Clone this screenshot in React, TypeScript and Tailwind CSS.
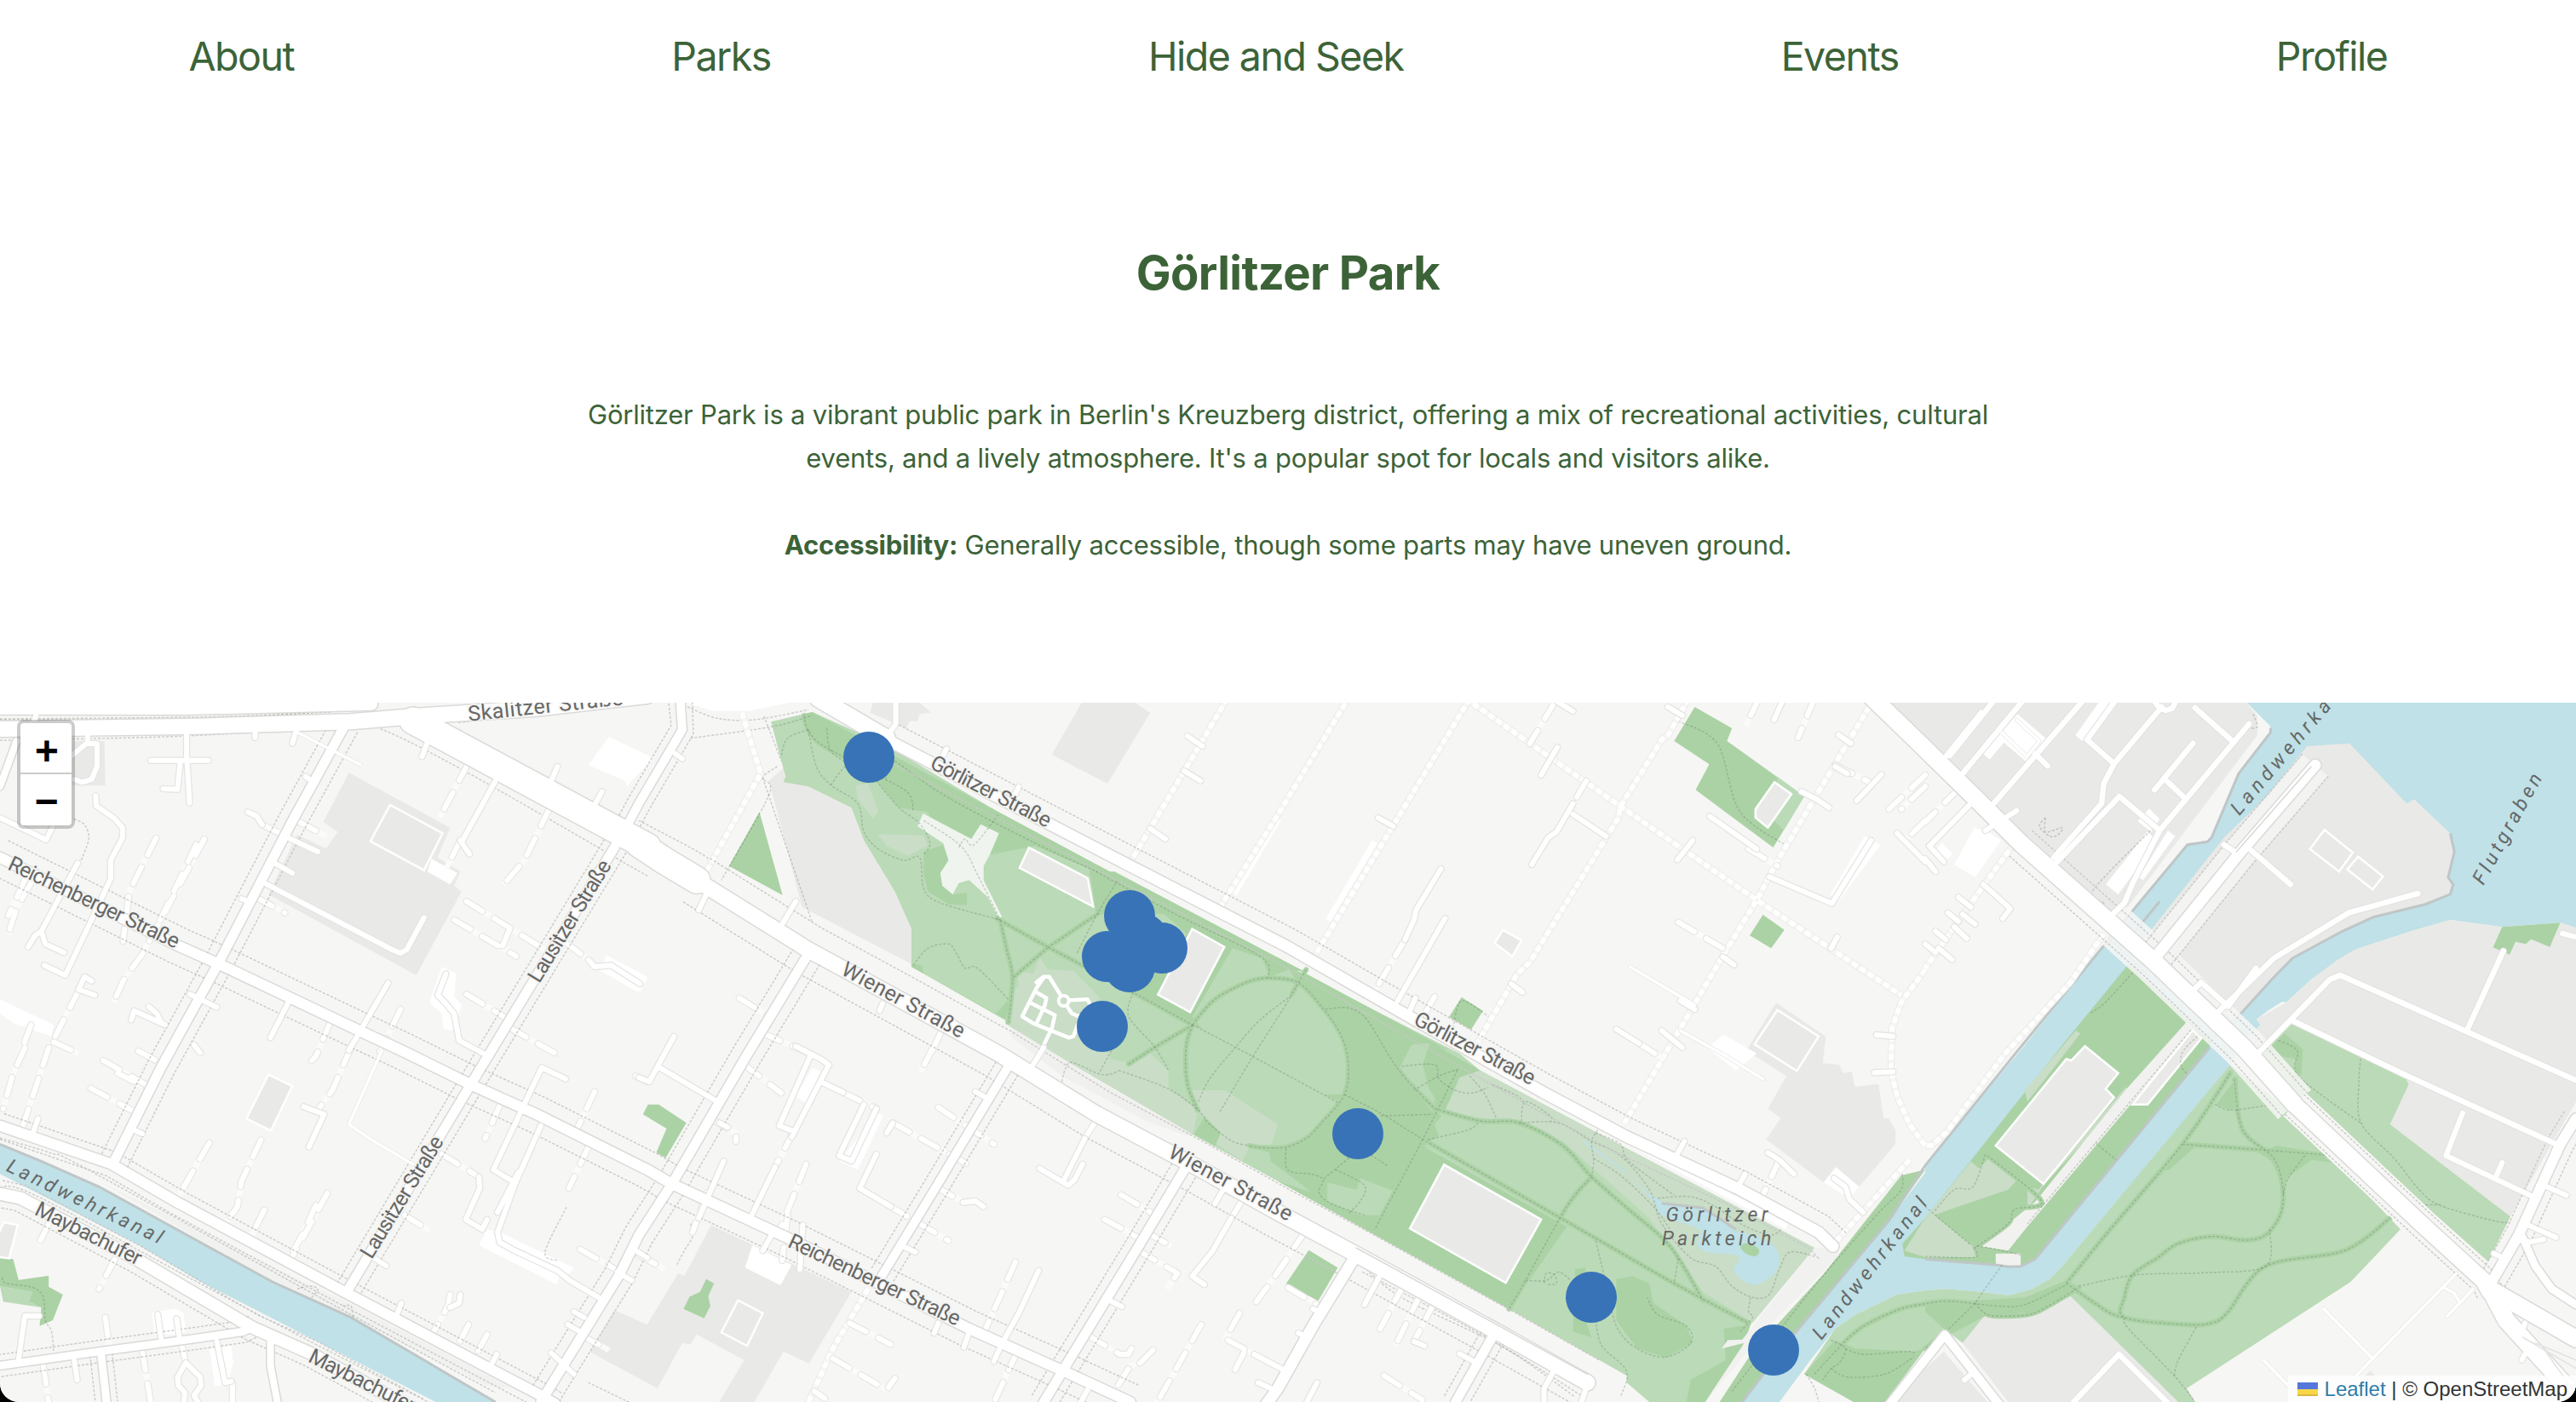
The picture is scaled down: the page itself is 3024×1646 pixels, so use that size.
import React from "react";

/* ------------------------------------------------------------------ */
/* Map geometry                                                        */
/* Each string lists "x y" pairs on a survey sheet. A, C, E, G run     */
/* from west to east; B, D, F, H are the same sheets shifted down by   */
/* 410 map pixels; K and L are detail sheets.                          */
/* ------------------------------------------------------------------ */

type Pt = [number, number];

const SHEETS: Record<string, [number, number, number]> = {
  A: [0, 820, 760 / 1568],
  B: [0, 1230, 760 / 1568],
  C: [750, 820, 760 / 1568],
  D: [750, 1230, 760 / 1568],
  E: [1500, 820, 760 / 1568],
  F: [1500, 1230, 760 / 1568],
  G: [2260, 820, 764 / 1568],
  H: [2260, 1230, 764 / 1568],
  K: [1180, 1030, 1 / 3],
  L: [2380, 1100, 1 / 3],
};

function points(src: string): Pt[] {
  let sheet = SHEETS.A;
  const out: Pt[] = [];
  let x: number | null = null;
  for (const tok of src.trim().split(/\s+/)) {
    if (SHEETS[tok]) {
      sheet = SHEETS[tok];
      continue;
    }
    const n = Number(tok);
    if (x === null) {
      x = n;
    } else {
      out.push([sheet[0] + x * sheet[2], sheet[1] + n / 3]);
      x = null;
    }
  }
  return out;
}

const toPath = (pts: Pt[]) =>
  "M" + pts.map(([x, y]) => `${x.toFixed(1)} ${y.toFixed(1)}`).join("L");
const line = (src: string) => toPath(points(src));
const lines = (list: string[]) => list.map(line).join("");
const areas = (list: string[]) => list.map((s) => line(s) + "Z").join("");

/* Parallel copy of a line, used for the pavements beside a street. */
function offset(src: string, d: number): string {
  const p = points(src);
  return toPath(
    p.map(([x, y], i) => {
      const a = p[Math.max(0, i - 1)];
      const b = p[Math.min(p.length - 1, i + 1)];
      const dx = b[0] - a[0];
      const dy = b[1] - a[1];
      const l = Math.hypot(dx, dy) || 1;
      return [x - (dy / l) * d, y + (dx / l) * d] as Pt;
    }),
  );
}

/* Smooth curve through the points, for the winding park paths. */
function smooth(src: string): string {
  const p = points(src);
  let d = `M${p[0][0].toFixed(1)} ${p[0][1].toFixed(1)}`;
  for (let i = 0; i < p.length - 1; i++) {
    const a = p[Math.max(0, i - 1)];
    const b = p[i];
    const c = p[i + 1];
    const e = p[Math.min(p.length - 1, i + 2)];
    const k = 0.16;
    d += `C${(b[0] + (c[0] - a[0]) * k).toFixed(1)} ${(b[1] + (c[1] - a[1]) * k).toFixed(1)} ${(c[0] - (e[0] - b[0]) * k).toFixed(1)} ${(c[1] - (e[1] - b[1]) * k).toFixed(1)} ${c[0].toFixed(1)} ${c[1].toFixed(1)}`;
  }
  return d;
}

const WATER = [
  "B 0 340 100 400 240 490 660 825 850 950 1200 1248 1055 1248 480 820 330 690 0 445",
  "G 765 0 1568 0 1568 808 1530 790 1390 805 1265 780 1180 815 1035 885 990 925 930 990 870 1070 860 1068 825 1100 798 1130 808 1150 780 1190 735 1290 H 600 300 330 770 300 815 255 852 200 872 120 858 50 850 0 855 F 1568 855 1500 870 1400 940 1350 990 1290 1100 1215 1248 1125 1248 1250 1010 1480 610 1568 440 H 0 415 235 0 G 470 800 632 515 680 505 690 490 755 265 832 120 830 95",
];

const GREY = [
  "A 845 262 1090 455 1060 560 1115 610 1100 660 1118 680 1008 975 650 690 720 480 790 528 818 470 783 435",
  "A 175 150 253 150 255 307 175 307",
  "C 1078 0 1205 0 1205 18 1238 52 1135 300 1000 198",
  "C 570 0 680 14 708 50 680 55 675 80 655 80 648 105 560 50",
  "C 350 245 355 290 410 310 515 385 545 500 620 680 660 810 660 935 395 735 315 290",
  "D 175 625 515 860 412 1112 350 1070 280 1248 195 1248 255 1100 140 1010 125 1045 105 1040 45 1200 -120 1070 -60 925 20 975 95 795 110 805",
  "E 1207 1072 1327 1190 1320 1285 1360 1290 1370 1320 1390 1315 1398 1368 1455 1358 1467 1478 1480 1480 1496 1520 1496 1570 1408 1720 1352 1650 1322 1705 1183 1553 1218 1478 1187 1445 1232 1330 1135 1240",
  "G -92 0 765 0 800 60 800 130 480 750 430 760 310 600 120 350 0 170",
  "G 920 168 1022 158 1160 370 1178 355 1265 475 1275 540 1260 630 1272 655 1265 690 1205 725 1080 770 1005 820 885 915 835 990 745 1135 650 1040 550 920 520 860 720 490 820 350",
  "G 1265 780 1390 805 1530 790 1568 808 H 1568 190 1410 595 1120 270 1165 130 1155 95 890 -85 800 30 740 -60 780 -40 808 -80 798 -100 870 -160 930 -240 990 -305 1035 -345 1180 -415",
  "H 140 945 270 930 350 875 615 1248 200 1248 90 1040",
  "H -130 1300 45 1070 150 1248 150 1300",
  "L 1207 1527 1260 1580 1160 1580",
];

const LIGHT_GREEN = [
  "C 320 82 420 48 600 165 870 400 1160 625 1568 935 E 0 925 440 1250 F 490 80 760 290 1300 705 1145 975 1130 1040 1035 1248 900 1248 845 1180 845 1155 560 920 0 470 D 1340 305 1080 65 C 895 1140 660 945 660 810 620 680 545 500 515 385 410 310 350 295 355 275",
  "H 735 60 860 200 970 370 1145 640 1025 825 630 1200 650 1248 610 1248 350 875 270 930 145 940 90 1040 45 990 F 1568 1060 1470 1248 1395 1248 1275 1150 1350 990 1400 940 1500 870 1568 855 H 50 850 120 858 200 872 255 852 300 815 330 770",
  "G 885 1145 H 1155 95 1165 130 1120 270 1410 595 1345 790 1200 590 800 30",
];

const DARK_GREEN = [
  "B 0 740 32 745 45 818 118 803 118 842 152 870 128 960 96 980 100 915 70 895 78 860 0 840",
  "C 292 400 218 590 348 693",
  "C 400 55 420 48 1160 625 1250 700 1110 760 1090 600 960 520 850 550 740 520 700 400 630 385 575 290 410 125",
  "C 690 540 737 515 750 570 730 615 735 660 760 690 795 685 795 728 750 725 700 680 690 620",
  "K 300 -20 385 -20 1060 335 1000 325 930 350 905 285 800 250 660 490 690 530 640 520 445 410 640 200 560 130 320 130",
  "C 660 935 685 940 690 970 865 1110 895 1060 900 1140 660 945",
  "K 1000 325 1065 342 1560 608 1490 585 1430 590 1450 640 1400 665 1440 750 1500 820 1560 850 1560 960 F 355 350 700 630 560 920 0 470 K 1080 1110 935 1000 930 970 860 945 990 950 1110 880 1180 790 1120 765 1190 765 1210 670 1190 570 1110 450 1030 370",
  "K 1495 580 F 490 80 445 105 400 230 385 215 K 1490 740 1470 660",
  "F 820 815 860 805 900 830 910 900 990 980 1005 1040 940 1092 870 1060 820 960",
  "F 1145 975 1080 990 1085 1100 1000 1170 990 1248 1035 1248 1110 1110",
  "G 490 935 690 1210 H 685 0 265 745 230 770 170 765 0 745 -50 735 -55 690 0 600 325 0",
  "G 1390 805 1530 790 1505 875 1460 848 1447 865 1422 857 1408 902 1368 877",
  "F 1568 430 1510 450 1320 800 1150 1070 1070 1248 1125 1248 1250 1010 1480 610",
  "F 1350 1030 1400 1060 1540 1070 1568 1060 1470 1248 1395 1248 1275 1150",
  "H 0 890 120 890 240 880 340 820 375 845 270 930 145 945 60 1010 0 930",
  "L 740 490 665 590 715 610 745 600",
  "L 550 730 820 755 880 735 1010 758 1080 795 1000 785 920 845 900 880 860 790 800 750 590 740 500 820 460 828",
  "L 905 340 970 395 965 480 935 530 945 430 845 412 825 420",
  "D 22 200 48 200 115 265 65 388 42 370 67 285 10 235",
  "D 163 815 182 830 168 875 173 910 158 953 108 920 123 877 148 860",
  "D 1370 245 1410 300 1395 345 1345 305",
  "E 1010 30 1100 105 1088 150 1275 345 1200 525 1012 322 1045 232 960 150",
  "E 1175 762 1227 815 1195 880 1143 835",
  "E 445 1052 497 1100 468 1167 415 1122",
  "F 75 713 145 775 98 892 20 832",
  "F 720 780 745 775 745 960 760 1020 715 1000",
];

/* Lawns laid over the darker tree cover. */
const LAWNS = [
  "K 1390 670 1430 590 1495 585 1470 660 1490 740 1520 790 1450 750",
  "F 120 475 190 500 200 460 290 510 250 590 200 590 120 540",
  "F 690 330 760 455 690 600 355 345 390 310 380 270 405 225 490 260 590 265",
  "E 1210 275 1275 345 1225 465 1195 420",
];

const PALE_GREEN = [
  "F 440 105 490 80 1300 705 1150 970 1030 860 960 740 900 600 830 510 690 330 590 262 490 260 405 225",
  "K 0 505 20 420 48 380 40 330 100 340 120 280 150 325 240 330 330 420 370 640 440 655 510 620 575 680 575 745 680 820 660 905 280 685 0 515",
  "K 655 750 775 750 960 870 935 950 860 950 835 1000 745 940 755 895 690 830",
  "C 525 305 555 300 580 395 568 425 530 355",
  "C 578 478 690 482 700 520 650 555 600 520",
  "H 0 600 18 585 115 700 122 738 0 738 -50 715",
  "L 0 530 170 330 187 340 0 580 -10 540",
  "L 345 530 365 545 60 870 0 960 0 880 40 890 60 860",
  "H 0 600 110 400 130 425 160 380 225 460 200 500",
];

const PAVED = [
  "L 560 300 590 322 0 1020 -68 1105 -165 1090 30 930 345 540",
  "H 170 725 230 725 230 770 170 765",
  "F 1300 705 1350 705 1360 730 1190 980 1035 1248 1130 1040 1075 1060 1090 1030 1125 1028",
];

const SHORE = [
  "G 790 50 830 95 832 120 755 265 690 490 680 505 632 515 470 800 430 760 480 740 610 520 800 130",
];

const COURTS = [
  "C 945 525 1087 633 1100 733 922 597",
  "C 1340 812 1418 875 1335 1105 1257 1043",
  "F 403 412 638 605 552 828 320 637",
  "A 945 375 1072 475 1027 605 897 503",
  "B 650 95 708 135 656 292 597 250",
  "B 10 615 43 625 22 742 0 738 -20 700",
  "D 240 890 300 935 262 1050 200 1003",
  "E 1203 295 1244 337 1187 455 1157 420 1157 390",
  "E 545 815 590 852 568 908 525 862",
  "E 1210 1097 1310 1190 1257 1312 1155 1218",
  "G 962 463 1030 543 997 610 927 530",
  "G 1043 557 1103 627 1078 673 1017 602",
  "H 385 -5 465 90 435 145 455 175 285 480 170 345 340 40 352 45",
  "L 583 328 612 358 423 590 370 590",
];

const WHITE_AREAS = [
  "A 1475 135 C 35 210 -30 310 A 1515 290 1425 235",
  "A 1070 945 1105 970 1100 1050 1118 1080 1110 1120 1095 1170 1075 1165 1070 1110 1040 1070",
  "A 1470 905 1568 980 1545 1035 1450 955",
  "A 0 1060 130 1150 125 1190 35 1145 0 1110",
  "A 1045 565 1108 615 1090 655 1035 610",
  "B 1180 640 1160 695 1348 835 1355 800 1380 795 1390 775 1210 650",
  "B 367 932 425 920 445 935 450 1000 430 1010 375 1010",
  "B 508 1060 560 1050 565 1110 550 1190 520 1190",
  "C 0 985 20 985 5 1030 0 1030",
  "C 115 14 180 44 265 44 380 10",
  "C 1540 415 1555 430 1448 695 1435 685",
  "D 420 70 440 85 405 195 380 170",
  "D 580 230 592 240 530 430 485 400",
  "D 275 695 370 765 343 837 257 775",
  "E 1422 485 1460 515 1360 710 1338 690",
  "E 228 500 242 508 128 785 116 778",
  "E 1080 1185 1160 1250 1110 1310 1040 1230",
  "F 1352 422 1408 490 1385 530 1322 475",
  "G 222 55 290 140 245 225 190 155 155 215 140 195 180 125",
  "G 425 0 462 0 378 150 362 130",
  "G 118 455 150 470 183 500 120 630 70 585",
  "G 535 470 560 500 465 690 435 655",
  "G 585 465 602 485 525 640 515 630",
  "G 540 388 565 425 545 470 512 432",
  "G 905 225 950 240 780 530 750 530",
  "G 40 510 65 545 50 580 20 540",
  "F 235 730 510 945 510 970 225 750",
  "F 570 1000 740 1135 740 1155 560 1020",
  "F 845 320 1235 620 1230 640 840 335",
];

/* Streets: [line, width, distance of the pavements (0 for none)] */
const STREETS: [string, number, number][] = [
  ["A 0 35 450 36 900 20", 14, 0],
  ["A 0 108 480 98 850 82 1010 62 1300 35 1568 -10", 18, 0],
  ["A 1000 78 1568 522 C 0 512 60 570 140 640", 31, 0],
  ["C 140 640 410 885 600 1035 870 1250 D 1110 235 1350 420 F 0 580 190 728 530 1000 750 1180", 18, 30],
  ["C 435 0 600 140", 20, 0],
  ["C 600 145 1190 590 1568 872 E 330 1130 F 640 155 840 310 1120 500 1310 650 1345 700", 13, 22],
  ["A 835 95 705 440 530 930 390 1300 B 275 405", 11, 17],
  ["A 0 560 430 870 530 935 870 1170 980 1245 B 1140 130 1300 235 1568 430 D 80 480 360 670 800 990 1030 1140 1190 1248", 12, 22],
  ["C 100 0 105 110 0 370 A 1520 445", 10, 14],
  ["A 1490 520 1190 1240 B 1140 130 1070 300 840 860", 11, 15],
  ["A 40 150 0 310", 8, 0],
  ["B 0 275 110 330 270 410 430 545 840 865 1310 1225 1345 1255", 12, 15],
  ["C 412 895 262 1255 D 80 480 0 660 B 1500 800 1310 1248", 11, 18],
  ["D 897 60 720 490 590 800", 10, 15],
  ["D 1325 420 1210 700 1030 1130 980 1250", 11, 16],
  ["F 190 730 85 980 0 1200 -30 1260", 13, 0],
  ["F 525 1005 430 1250", 11, 15],
  ["B 0 515 50 530 330 745 610 985 750 1075 1010 1280", 14, 16],
  ["B 0 1120 240 1070 470 1025 590 1000 615 980", 9, 13],
  ["B 245 1080 258 1250", 9, 13],
  ["B 655 1020 655 1120 672 1250", 8, 0],
  ["G 940 235 760 540 550 920", 13, 20],
  ["H 1568 250 1530 340 1430 660 1355 850", 12, 16],
  ["H 1440 670 1470 770 1510 850 1568 905", 9, 0],
  ["H 1360 850 1568 1025", 20, 0],
  ["H 1360 850 1400 960 1568 1230", 20, 0],
  ["E 1435 -10 1568 178 G 120 350 230 510", 20, 0],
  ["G 230 510 550 925 768 1230 H 890 200", 20, 20],
  ["H 890 200 1195 620 1345 820 1360 860", 19, 16],
  ["F 1480 1260 H 47 1012 180 1260", 10, 0],
];

const SERVICE = [
  "A 452 120 452 215", "A 365 218 505 218", "A 437 220 430 320 395 318", "A 453 220 459 368",
  "A 212 130 212 158 235 160 235 240 222 285 200 295 180 285", "A 175 200 212 155", "A 618 105 618 138",
  "A 720 100 708 158", "A 232 343 233 378 275 420 297 455 297 490 268 570 268 635 215 800 158 975 107 940",
  "A 188 580 100 820 110 865 155 895", "A 100 820 85 835 68 875", "A 0 420 112 498 128 450",
  "A 600 400 622 415 635 445", "A 690 485 770 540", "A 665 580 708 615", "A 740 275 755 290", "A 585 705 600 715",
  "A 640 650 950 885 970 897 985 885 1027 772", "A 940 1002 845 1240", "A 700 1065 655 1195", "A 460 1042 525 1088",
  "A 318 1132 325 1100 400 1150", "A 360 1085 380 1110 390 1140", "A 205 980 190 1025 230 1045", "A 205 980 222 995",
  "A 1080 970 1060 1045 1080 1075 1100 1110 1112 1205 1170 1250", "A 1350 240 1335 290", "A 1458 328 1440 375",
  "A 1035 155 1022 205", "A 1115 500 1137 548", "A 1120 500 1200 290", "A 1425 920 1440 945 1480 940 1550 1005",
  "A 470 1220 485 1248", "A 87 60 80 90",
  "B 735 208 785 235 748 350", "B 1160 455 1162 495 1128 605 1168 640 1180 605", "B 1312 70 1370 110",
  "B 1312 70 1195 430 1235 465", "B 1310 275 1250 470 1205 650 1210 685 1240 710 1350 785 1380 820 1450 880",
  "B 1255 440 1205 580", "B 900 735 935 768", "B 972 900 960 945", "B 1115 870 1112 900 1090 915",
  "B 1203 1080 1187 1125", "B 1390 930 1415 950", "B 1375 975 1410 1005", "B 1335 1075 1390 1150",
  "B 1495 790 1530 820", "B 1540 715 1568 740", "B 325 290 345 303", "B 92 250 80 300", "B 95 945 60 945 45 1100",
  "B 382 940 390 1025", "B 428 955 435 1025", "B 450 1110 485 1160 487 1190 470 1225 480 1250",
  "B 450 1110 430 1160 432 1190 448 1215 445 1250", "B 525 1035 545 1180 560 1175", "B 180 1100 187 1170",
  "C 88 195 105 212", "C 165 685 145 745", "C 380 715 345 800", "C 622 0 622 90 605 125", "C 745 178 735 205",
  "C 920 312 910 340", "C 1328 132 1365 168", "C 1320 255 1360 290", "C 1238 458 1275 495", "C 590 1075 583 1100",
  "C 85 1190 25 1350 0 1335", "C 380 1225 440 1270 460 1290 370 1545", "C 415 1260 340 1505 375 1525",
  "C 330 1650 270 1830", "C 50 1300 190 1420", "C 440 1350 495 1388", "C 575 1445 515 1630 485 1610 545 1430",
  "C 615 1495 600 1530", "C 815 1385 840 1405", "C 575 1605 535 1725 610 1790", "C 785 1775 815 1770 835 1790",
  "C 640 1930 670 1950", "C 205 1630 145 1830", "C 325 1880 300 1945", "C 397 1855 390 2010",
  "D 970 425 1040 485 1055 465 1075 410", "D 1080 320 1030 465", "D 1415 500 1395 550",
  "D 1435 600 1390 715 1340 805 1370 835", "D 1140 890 1170 912", "D 968 785 920 935 880 1040 860 1105",
  "D 725 970 715 1005", "D 800 1000 787 1055", "D 980 0 955 60", "D 1090 1195 1070 1250", "D 1500 1180 1530 1200",
  "D 1490 1080 1568 1140", "D 195 265 215 280",
  "E 675 10 715 45", "E 677 172 638 270", "E 715 370 675 470 655 490 615 585", "E 715 408 795 485", "E 945 30 980 60",
  "E 1225 0 1202 75", "E 1358 128 1388 158", "E 1350 240 1380 265", "E 1462 268 1435 310 1402 360",
  "E 1268 328 1305 355 1335 385", "E 1046 415 1160 530", "E 1190 628 1342 722 1437 500", "E 1005 500 968 568",
  "E 243 420 280 450", "E 395 600 335 745 330 780 308 850", "E 405 775 290 1065", "E 333 1055 320 1100",
  "E 1078 910 1105 938", "E 975 1065 1010 1095", "E 565 1005 593 1035", "E 1355 840 1340 880", "E 1450 1185 1490 1190",
  "E 930 1170 980 1230", "E 1500 475 1568 575", "E 1445 1318 1490 1315", "E 820 1165 875 1215",
  "F 985 330 967 375", "F 1132 445 1115 490", "F 1187 370 1215 395 1250 445", "F 1418 580 1385 535 1375 490 1347 460",
  "F 250 795 210 905", "F 330 1035 355 1050", "F 85 920 100 930", "F 50 1005 70 1020", "F 440 1078 475 1105",
  "F 670 1135 645 1200 645 1250", "F 750 1185 735 1250", "F 95 1180 70 1250",
  "G 220 395 145 465", "G 110 370 10 520 45 575", "G 0 565 25 610", "G 140 655 205 740 187 775", "G 80 700 110 735",
  "G 55 755 80 785", "G 90 760 120 795", "G 25 820 50 850", "G 70 805 100 845", "G 0 865 25 895", "G 32 880 65 920",
  "G 1535 828 1568 840",
  "H 1295 230 1255 380 1457 520", "H 1390 405 1375 455", "H 1490 485 1545 520", "H 1445 620 1520 668",
  "H 1430 670 1455 685 1490 675", "H 1370 725 1385 735", "H 1445 970 1435 1010", "H 1445 1080 1437 1100",
  "H 115 1145 95 1170",
];

const PASSAGES = [
  "A 378 492 313 680 298 855", "A 1133 230 1065 420", "A 1330 390 1270 570 1220 655", "A 1115 500 1080 600",
  "A 635 445 700 490", "A 725 435 790 485", "A 620 700 690 755", "A 495 495 345 900 300 990 275 1070",
  "A 475 515 385 790", "A 60 640 20 765", "A 75 650 40 740 20 830", "A 800 1140 765 1260 755 1275",
  "A 970 1095 920 1245", "A 1130 1042 1225 1125", "A 1235 1160 1345 1250", "A 1370 860 1430 925",
  "A 190 1030 120 1230", "A 75 1150 50 1248", "A 130 1210 190 1250", "A 1100 780 1250 908", "A 1130 715 1320 885",
  "A 1235 810 1215 880",
  "B 60 0 30 100 8 215", "B 118 0 75 190 52 290", "B 250 45 365 140", "B 285 90 360 145", "B 220 143 325 225",
  "B 335 12 390 55", "B 507 335 465 440 430 530", "B 632 325 585 470 575 560 545 620", "B 640 572 608 665",
  "B 793 512 705 745", "B 765 555 735 650 700 745", "B 850 0 805 150 770 220", "B 118 620 92 697", "B 278 745 240 850",
  "B 1070 375 1160 455", "B 980 590 1040 645", "B 1210 205 1175 320", "B 1440 155 1395 295", "B 1425 350 1378 495",
  "B 1405 710 1490 780", "B 1090 870 1085 910 1045 1015", "B 1135 975 1105 1060", "B 1180 1010 1148 1095",
  "B 1410 1015 1475 1065", "B 255 950 265 1055", "B 105 1120 118 1250", "B 345 1070 365 1250", "B 440 1045 450 1110",
  "B 563 1180 563 1250", "B 1540 100 1568 120",
  "C 243 1055 310 1115", "C 300 1180 430 1260", "C 730 1180 705 1260", "C 255 1290 345 1390", "C 495 1388 575 1445",
  "C 615 1495 795 1640", "C 725 1440 860 1570", "C 610 1790 750 1910", "C 720 1720 785 1775", "C 375 1525 330 1650",
  "C 405 1640 345 1860", "C 360 1820 347 1980", "C 165 1740 130 1880", "C 175 1480 235 1530 235 1560",
  "D 1110 250 1080 320", "D 1168 518 1245 585", "D 1128 605 1210 670", "D 1235 655 1290 700", "D 1210 715 1305 795 1278 850",
  "D 1460 540 1435 600", "D 1568 750 1490 905", "D 1090 1015 1165 1080 1185 1080 1195 1055", "D 912 755 840 990",
  "D 920 935 885 1030", "D 915 1075 860 1250", "D 1245 1065 1215 1110 1190 1120 1150 1215", "D 1362 975 1255 1250",
  "D 1455 935 1420 1025 1490 1080", "D 1465 1075 1442 1140", "D 510 970 610 1045", "D 470 1095 600 1205 620 1165",
  "D 425 1210 450 1235", "D 0 730 62 780", "D 712 0 683 85",
  "E 670 15 610 160", "E 747 290 715 370", "E 1165 0 1133 98", "E 1300 0 1260 138", "E 1350 235 1440 300",
  "E 1140 530 1210 590", "E 308 850 235 1030", "E 380 1050 360 1100", "E 970 788 1090 890", "E 875 1215 935 1270",
  "E 1568 270 1480 390", "E 1568 310 1510 390", "E 1568 430 1520 500",
  "F 65 650 0 790", "F 305 835 248 990", "F 345 870 285 1050", "F 380 895 330 1035", "F 25 845 95 905",
  "F 257 1155 350 1240", "F 1215 395 1170 535", "G 80 320 0 435",
];

const YARD = [
  "G 170 0 60 200", "G 240 0 90 265", "G 135 50 50 205", "G 385 0 165 370", "G 462 0 390 145 455 230",
  "G 570 30 455 230 430 300 425 370 310 560", "G 315 580 468 345 565 465", "G 780 90 565 465 500 650 480 720 445 770",
  "G 645 158 553 322", "G 578 285 625 350", "G 650 33 740 150", "G 720 515 755 550", "G 785 535 880 655",
  "G 1187 687 1020 755 840 915 695 1120", "G 797 950 730 1085 665 1000 635 1045", "G 1000 975 1568 1345",
  "G 1000 975 975 990 795 1260", "G 885 1135 H 1155 95 1520 340", "G 1393 890 1305 1170", "G 265 195 295 238",
  "G 555 15 565 35 580 42 595 35 602 15", "H 350 1260 467 1080 590 1260",
];

const THIN_YARD = [
  "A 718 118 873 233", "B 925 10 845 270 895 320 1000 410", "E 853 945 1010 1080", "E 975 1170 1080 1255 1175 1340",
  "H 960 920 1078 1095", "H 1280 795 1078 1095 1035 1160", "H 1250 845 1275 865 1285 890", "H 1320 850 1258 945",
  "H 815 1100 875 1190", "G 185 120 245 205 275 150 220 75",
];

const PEDESTRIAN = [
  "C 250 50 262 110 295 265 165 605", "C 1425 0 1195 565", "E 175 -10 0 410 C 1410 730", "E 465 0 90 905",
  "E 455 0 830 380 1160 710 1510 1045", "E 995 0 945 130 930 145 830 380 825 420 610 930 580 970 485 1210",
  "E 1432 30 1215 560 1160 710 1085 890 840 1495", "E 1568 955 1510 1070 1488 1160 1485 1310 1500 1400 1530 1500 1568 1575",
  "G 215 510 145 650 0 950", "G 430 830 350 1000 190 1255 H 50 300 15 345 0 345", "F 1530 395 1350 685",
  "D 555 850 470 1060 410 1250",
];

const PARK_PATHS = [
  "C 875 780 890 880 905 985 895 1140", "K -30 145 150 245 450 405 660 520", "C 990 878 1115 755",
  "C 990 878 905 985", "K 660 520 525 600 435 658",
  "K 660 520 690 480 745 425 850 370 925 355 1030 370 1110 450 1180 550 1208 650 1195 765 1110 870 1060 920 990 950 900 952 860 945",
  "K 660 520 640 580 635 660 645 740 678 820", "K 1060 325 1010 410",
  "E 115 1095 170 1090 215 1130 270 1260 F 310 110 380 215", "K 1195 765 1330 835 F 360 330 685 600 960 830 1140 970",
  "F 435 80 345 340 235 640", "F 380 215 490 258 585 265 690 345 760 455 850 570 950 700 1030 890",
  "F 760 455 700 560 600 820 560 920",
  "H 735 90 620 340 440 650 340 830", "H 620 340 810 360 965 378",
  "H 745 110 765 290 840 390 862 500 855 590 820 660 770 678 690 665 610 690 560 740 500 800 480 880 480 950 620 975 690 970 730 930 820 770 1010 715 1120 600",
  "H 340 830 440 930 480 950", "F 1300 1150 1400 1000 1500 925 1568 902 H 60 893 175 910 240 905 340 835",
  "H 120 900 50 1000 0 1060", "H 120 900 150 940 210 945 270 930 370 845", "H 150 380 280 540 215 570 200 620 120 705",
  "C 400 60 410 110 450 170 600 280",
];

const FOOTPATHS = [
  "C 410 110 430 240 465 305 530 370 545 470 580 530 640 570 680 560 690 670 730 720 875 780",
  "C 575 290 630 385 680 440 705 510 690 550", "C 455 105 470 195 560 260 650 330 665 400", "C 690 430 780 520 820 620 875 780",
  "C 410 110 360 140 345 200", "C 465 305 500 240 560 200", "C 775 525 790 495 812 515 870 410",
  "C 665 940 700 880 750 865 770 900 790 950 820 950 895 1060", "C 1160 640 1110 760 1060 900",
  "K 450 405 435 490 525 595 575 680", "K 375 610 330 690", "K 200 720 210 680 235 652 330 692 375 692 400 680",
  "K 400 680 575 745 680 820 720 870 800 930 860 945", "K 660 520 810 598 1175 795",
  "K 680 790 720 710 810 600 900 500 1010 415", "K 757 825 870 635 1010 415",
  "C 620 220 750 350 960 510 1110 610", "K 320 -20 600 130 900 280 925 355",
  "F 775 290 760 330 765 400 760 455", "F 765 390 830 450 910 560 950 640",
  "F 585 265 680 265 760 330 830 380 900 500 930 620 1000 740 1060 770 1100 840 1150 880 1190 870 1215 780 1240 720 1300 735",
  "F 920 530 1000 525 1060 560 1120 620 1190 660 1220 640", "F 770 300 830 340 850 400 960 520", "F 590 260 600 190 660 240 660 260",
  "F 300 65 380 60 390 110 430 150 470 160 510 140", "F 520 130 580 170 600 200", "F 465 100 500 160 530 250", "F 330 150 390 100 440 75",
  "F 485 265 460 290 360 325", "F 250 240 375 235", "F 20 355 20 420 40 440 80 445 110 465 100 510 130 550 210 590",
  "F 265 415 200 370 130 440 110 465", "F 140 430 210 485 200 540 170 585", "F 600 820 650 820 680 790 710 820",
  "F 645 830 650 795 670 800 675 830 655 835", "F 770 680 780 740 790 800 820 980 870 1060 940 1090 1000 1040 990 980 920 940 895 880",
  "F 770 960 785 1050 845 1140 830 1230", "F 970 740 960 830", "F 1145 880 1140 930 1150 950 1120 1000",
  "H 370 840 510 800 670 793 820 770 830 640", "H 480 950 490 990 600 1155 650 1248", "H 600 1155 610 1100 655 980",
  "H 1050 25 1045 120 1050 265 1130 390 1190 500 1240 555 1370 610 1410 615", "H 1185 555 1240 553",
  "L 870 360 950 400 955 490 1180 660", "L 660 590 712 610 800 600 870 590",
  "H 145 375 115 490 70 500 20 580", "H 410 335 460 395", "H 915 380 875 460 862 520", "H 0 735 120 738 125 700 230 730",
  "H 185 765 120 900", "L 380 115 275 230 220 270", "L 610 340 550 400 540 450 560 480", "L 595 305 0 1010",
  "F 1340 1030 1375 1060 1360 1110 1340 1130 1320 1170", "F 1375 1060 1420 1080 1530 1070 1540 1085",
  "F 1340 1130 1380 1160 1470 1150 1540 1090", "F 1510 430 1510 500 1450 590 1300 840 1100 1210", "F 1280 1150 1300 1200 1310 1248",
  "B 5 810 15 830 80 845 105 880 110 960 125 1000 130 1070", "E 970 80 1065 160 1120 400 1240 525", "E 425 1160 445 1065 510 1120",
  "C 118 30 190 70 280 75 410 40", "C 125 140 320 100 420 60", "C 335 240 300 280 315 340 200 640", "C 303 62 345 220", "C 300 280 420 790",
  "C 0 430 160 555 165 590", "A 0 72 500 65 800 48", "A 0 75 500 70 810 45", "A 0 148 400 135 700 115 930 112 1568 625",
  "A 1090 125 1568 490", "A 1110 85 1568 20", "B 0 318 120 370 220 435 850 940 1200 1215", "B 0 490 100 530 580 905 1060 1265",
  "A 180 425 205 445 215 495 195 575", "D 125 620 130 665 110 715 90 770", "B 1372 562 1320 720 1350 750",
  "F 200 760 300 880 540 1050 740 1230", "F 205 790 530 1040 720 1230", "G 290 420 275 450 300 485 320 480 330 455 290 470 290 420",
  "G 550 455 405 675 430 720 420 740", "G 440 840 545 985", "G 485 795 545 885", "H 0 560 110 695",
  "G 790 55 800 100 780 105", "B 1425 1180 1540 1260", "B 720 850 750 840 770 850 755 880", "B 830 910 850 910 855 950",
];

const PLAYGROUND = [
  "K 135 355 110 390 60 490 100 515 225 565 240 560 255 520", "K 110 370 135 350 155 350 195 415",
  "K 225 433 290 430 300 450", "K 215 450 235 480 260 490", "K 110 405 145 425 140 450 110 515",
  "K 85 440 175 485 165 530 100 665",
];

const BANKS = [
  "B 0 340 100 400 240 490 660 825 850 950 1200 1248", "G 832 105 832 120 755 265 690 490 680 505 632 515 470 800 215 1255 H 0 415 F 1480 610 1250 1010 1125 1248",
  "G 1265 475 1275 540 1260 630 1272 655 1265 690 1205 725 1080 770 1005 820 885 915 835 990 745 1135",
  "H 685 0 265 745 230 770 200 772 170 765 0 745", "G 565 715 495 840", "F 930 548 1030 565 1110 640",
];

type Label = { path: string; text: string; italic?: boolean };

const LABELS: Label[] = [
  { path: "A 1135 80 1320 55 1510 22", text: "Skalitzer Straße" },
  { path: "A 16 600 425 882", text: "Reichenberger Straße" },
  { path: "A 1306 1006 1482 588", text: "Lausitzer Straße" },
  { path: "B 900 748 1076 330", text: "Lausitzer Straße" },
  { path: "B 13 433 200 557 385 692", text: "Landwehrkanal", italic: true },
  { path: "B 81 586 333 768", text: "Maybachufer" },
  { path: "B 744 1104 996 1286", text: "Maybachufer" },
  { path: "C 702 243 988 456", text: "Görlitzer Straße" },
  { path: "C 487 970 778 1198", text: "Wiener Straße" },
  { path: "D 1279 383 1572 612", text: "Wiener Straße" },
  { path: "D 358 700 769 981", text: "Reichenberger Straße" },
  { path: "E 326 1146 613 1363", text: "Görlitzer Straße" },
  { path: "F 1317 1032 1450 800 1575 550", text: "Landwehrkanal", italic: true },
  { path: "G 757 415 900 200 1040 -75", text: "Landwehrkanal", italic: true },
  { path: "G 1345 660 1420 470 1487 280", text: "Flutgraben", italic: true },
  { path: "F 940 612 1187 612", text: "Görlitzer", italic: true },
  { path: "F 930 697 1195 697", text: "Parkteich", italic: true },
];

const MARKERS: Pt[] = [
  [1020, 889],
  [1326, 1075],
  [1300, 1123],
  [1364, 1113],
  [1326, 1135],
  [1341, 1102],
  [1294, 1205],
  [1594, 1331],
  [1868, 1523],
  [2082, 1585],
];

const length = (pts: Pt[]) =>
  pts.slice(1).reduce((s, p, i) => s + Math.hypot(p[0] - pts[i][0], p[1] - pts[i][1]), 0);

function MapLabels() {
  return (
    <g
      fontFamily="Roboto, 'Liberation Sans', sans-serif"
      fontSize="24"
      fill="#666766"
      stroke="#f4f4f2"
      strokeOpacity="0.75"
      strokeWidth="4"
      strokeLinejoin="round"
      paintOrder="stroke"
    >
      {LABELS.map((l, i) => {
        const pts = points(l.path);
        const len = length(pts);
        const a = pts[0];
        const b = pts[pts.length - 1];
        const angle = (Math.atan2(b[1] - a[1], b[0] - a[0]) * 180) / Math.PI;
        return (
          <text
            key={i}
            transform={`translate(${a[0]} ${a[1]}) rotate(${angle})`}
            textLength={len}
            fontStyle={l.italic ? "italic" : "normal"}
            fontSize={l.italic ? 23 : 25}
            strokeWidth={l.italic ? 0 : 4}
          >
            {l.text}
          </text>
        );
      })}
    </g>
  );
}

function ParkMap() {
  return (
    <svg className="block h-full w-full" viewBox="0 825 3024 821" fill="none" aria-label="Map of Görlitzer Park">
      <rect x="0" y="825" width="3024" height="821" fill="#f6f6f4" />
      <path d={areas(["B 240 470 700 800 860 910 1240 1200 1180 1190 850 950 660 825"])} fill="#f1f1ef" />
      <path d={areas(["K 20 515 280 660 280 690 660 905 640 910 500 860 200 700 20 560"])} fill="#f0f0ee" />
      <path d={areas(WATER)} fill="#bfe1e7" />
      <path d={areas(SHORE)} fill="#f6f6f4" />
      <path d={areas(GREY)} fill="#e9e9e7" />
      <path d={areas(LIGHT_GREEN)} fill="#bbdab7" />
      <path d={areas(["B 0 840 78 860 70 895 100 915 8 895"])} fill="#bbdab7" />
      {DARK_GREEN.map((s, i) => (
        <path key={i} d={line(s) + "Z"} fill="#abd2a5" />
      ))}
      <path d={areas(LAWNS)} fill="#bbdab7" />
      {PALE_GREEN.map((s, i) => (
        <path key={i} d={line(s) + "Z"} fill="#c9ddc7" />
      ))}
      <path d={areas(["D 1370 245 1410 300 1395 345 1345 305"])} fill="#abd2a5" />
      <path d={areas(PAVED)} fill="#f1f1ef" />
      <path
        d={areas(["C 688 405 805 495 828 443 872 475 850 550 835 590 835 640 880 770 872 775 845 700 800 640 775 650 760 690 735 660 730 615 750 570 737 510 675 450"])}
        fill="#eff5ee"
      />
      <path
        d={smooth("F 835 430 880 490 920 535 970 555 1040 572 1100 640 1150 660 1195 690 1215 740 1200 800 1150 835 1105 790 1115 735 1040 720 1015 690 1020 640 930 590 910 540 835 430")}
        fill="#bfe1e7"
      />
      <path d={line("F 740 330 840 435")} stroke="#bfe1e7" strokeWidth="2" />
      <path d={smooth("F 1122 695 1140 688 1165 710 1160 733 1140 730 1122 708 1122 695")} fill="#abd2a5" />

      <path d={lines(BANKS)} stroke="#bfc6c7" strokeWidth="3" />

      {PARK_PATHS.map((s, i) => (
        <path key={i} d={smooth(s)} stroke="#abd2a5" strokeWidth="6" strokeLinecap="round" />
      ))}
      <path d={areas(COURTS)} fill="#e9e9e7" stroke="#ffffff" strokeWidth="2.5" />
      <path d={areas(WHITE_AREAS)} fill="#ffffff" />
      {[...PARK_PATHS, ...FOOTPATHS].map((s, i) => (
        <path key={i} d={smooth(s)} stroke="#5f6b5f" strokeOpacity="0.3" strokeWidth="1.4" strokeDasharray="3 2" />
      ))}
      <path d={lines(PLAYGROUND)} stroke="#ffffff" strokeWidth="4.5" strokeLinejoin="round" strokeLinecap="round" />
      <circle cx="1248.7" cy="1175" r="6" fill="#c9ddc7" stroke="#ffffff" strokeWidth="4" />

      <path d={line("G 445 785 550 925 768 1230 H 890 200")} stroke="#f6f6f4" strokeOpacity="0.85" strokeWidth="52" />
      <path d={line("H 890 200 1195 620 1345 815")} stroke="#f6f6f4" strokeWidth="38" />
      <path d={line("G 940 235 760 540 550 920")} stroke="#f3f3f1" strokeWidth="38" />

      <g strokeLinejoin="round" strokeLinecap="round">
        <path d={lines(PEDESTRIAN)} stroke="#ebebe9" strokeWidth="8" strokeLinecap="butt" />
        <path d={lines(PEDESTRIAN)} stroke="#f6f6f4" strokeWidth="6" strokeLinecap="butt" />
        <path d={lines(PEDESTRIAN)} stroke="#ffffff" strokeWidth="6" strokeDasharray="7 4" strokeLinecap="butt" />

        <path d={lines(PASSAGES)} stroke="#fbfbfa" strokeWidth="6.5" strokeLinecap="butt" />
        <path d={lines(PASSAGES)} stroke="#e7e7e5" strokeWidth="8.5" strokeDasharray="22 16" />
        <path d={lines(PASSAGES)} stroke="#ffffff" strokeWidth="6" strokeDasharray="22 16" />

        <path d={lines(SERVICE)} stroke="#e4e4e2" strokeWidth="8.5" />
        <path d={lines(YARD)} stroke="#e1e1df" strokeWidth="8.5" />
        <path d={lines(THIN_YARD)} stroke="#e9e9e7" strokeWidth="5" />
        {STREETS.map(([s, w], i) => (
          <path key={i} d={line(s)} stroke="#dadad8" strokeWidth={w + 3} />
        ))}
        {STREETS.filter(([, , o]) => o > 0).map(([s, , o], i) => (
          <path
            key={i}
            d={offset(s, o) + offset(s, -o)}
            stroke="#c8c8c6"
            strokeWidth="1.4"
            strokeDasharray="3 2"
            strokeLinecap="butt"
          />
        ))}
        <path d={lines(SERVICE)} stroke="#ffffff" strokeWidth="6" />
        <path d={lines(YARD)} stroke="#ffffff" strokeWidth="6.5" />
        <path d={lines(THIN_YARD)} stroke="#ffffff" strokeWidth="3.5" />
        {STREETS.map(([s, w], i) => (
          <path key={i} d={line(s)} stroke="#ffffff" strokeWidth={w} />
        ))}
        <path d={line("G 930 240 750 540")} stroke="#d9d9d7" strokeWidth="1.5" />
        <path d={line("F 190 705 750 1150")} stroke="#d9d9d7" strokeWidth="1.5" />
        <path d={lines(["H 1440 1020 1568 1130", "H 1470 1040 1568 1100", "H 1490 1060 1568 1220"])} stroke="#e2e2e0" strokeWidth="1.5" />
      </g>

      <MapLabels />

      <g fill="#3873b8">
        {MARKERS.map(([x, y], i) => (
          <circle key={i} cx={x} cy={y} r="30" />
        ))}
      </g>
    </svg>
  );
}

function ZoomControl() {
  return (
    <div className="absolute top-5 left-5 w-[68px] overflow-hidden rounded-lg border-4 border-black/20 bg-white bg-clip-padding font-['Liberation_Mono',monospace] text-[48px] font-bold text-black">
      <button className="flex h-[60px] w-full items-center justify-center border-b-2 border-[#cccccc] pt-[13px] pl-[2px] leading-none">+</button>
      <button className="flex h-[60px] w-full items-center justify-center pt-[10px] pl-[2px] leading-none">−</button>
    </div>
  );
}

function Attribution() {
  return (
    <div className="absolute right-0 bottom-0 flex h-[31px] items-center gap-2 bg-white/80 pr-[10px] pl-[11px] font-['Liberation_Sans',sans-serif] text-2xl leading-none text-[#333333]">
      <svg className="h-4 w-6" viewBox="0 0 12 8">
        <path fill="#5577dc" d="M0 0h12v4H0z" />
        <path fill="#f8d648" d="M0 4h12v3H0z" />
        <path fill="#dcb93c" d="M0 7h12v1H0z" />
      </svg>
      <span className="whitespace-pre">
        <a className="text-[#2f7da9]">Leaflet</a> | © OpenStreetMap
      </span>
    </div>
  );
}

const NAV = ["About", "Parks", "Hide and Seek", "Events", "Profile"];

export default function App() {
  return (
    <div className="bg-black">
      <div className="flex h-[1646px] w-full flex-col overflow-hidden rounded-b-[22px] bg-white font-['Inter',sans-serif] text-[#3c6338]">
        <nav className="flex h-[132px] items-center justify-around pt-[2px] text-[46.5px] tracking-[-1.5px]">
          {NAV.map((item) => (
            <a key={item}>{item}</a>
          ))}
        </nav>

        <main className="flex flex-col items-center text-center">
          <h1 className="mt-[154px] text-[54.5px] leading-[68px] font-bold tracking-[-0.65px]">Görlitzer Park</h1>
          <div className="mt-[107px] w-[1700px] text-[31px] leading-[51px] tracking-[-0.21px]">
            <p>
              Görlitzer Park is a vibrant public park in Berlin's Kreuzberg district, offering a mix of recreational
              activities, cultural events, and a lively atmosphere. It's a popular spot for locals and visitors alike.
            </p>
            <p className="mt-[51px]">
              <strong className="font-bold">Accessibility:</strong> Generally accessible, though some parts may have
              uneven ground.
            </p>
          </div>
        </main>

        <section className="relative mt-auto h-[821px] w-full overflow-hidden">
          <ParkMap />
          <ZoomControl />
          <Attribution />
        </section>
      </div>
    </div>
  );
}
